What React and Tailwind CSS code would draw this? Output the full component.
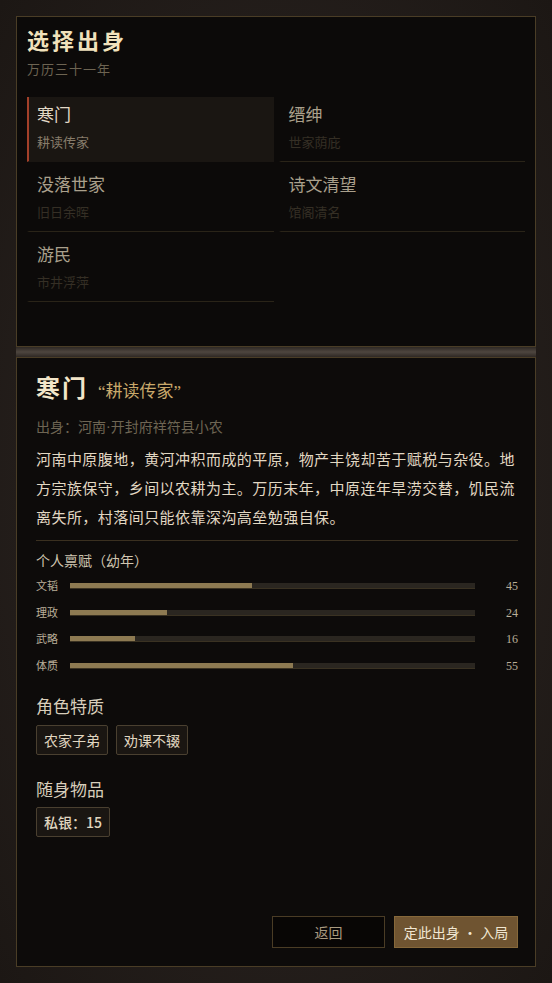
import React, { useState } from "react";

const origins = [
    { name: "寒门", sub: "耕读传家" },
    { name: "缙绅", sub: "世家荫庇" },
    { name: "没落世家", sub: "旧日余晖" },
    { name: "诗文清望", sub: "馆阁清名" },
    { name: "游民", sub: "市井浮萍" },
];

const stats = [
    { label: "文韬", value: 45 },
    { label: "理政", value: 24 },
    { label: "武略", value: 16 },
    { label: "体质", value: 55 },
];

// 正文用衬线拉丁字体 + CJK 回退，标签与按钮用无衬线
const serif = { fontFamily: '"Liberation Serif", "Noto Sans CJK SC", serif' };
const sans = { fontFamily: '"Noto Sans CJK SC", "Noto Sans", sans-serif' };

const App = () => {
    const [selected, setSelected] = useState(0);

    return (
        <div
            className="min-h-[983px] w-[552px] p-4 bg-[radial-gradient(ellipse_at_center,#2e2824_0%,#241e1b_60%,#1c1714_100%)]"
            style={serif}
        >
            {/* 选择出身 */}
            <div className="h-[331px] border border-[#4a3d26] bg-[#0c0a09] px-[10px] pt-[11px]">
                <h1 className="text-[22px] leading-[28px] font-bold tracking-[3px] text-[#f1e2bc]">选择出身</h1>
                <p className="mt-[5px] text-[13px] leading-[18px] tracking-[1px] text-[#6d6452]">万历三十一年</p>

                <div className="mt-[18px] grid grid-cols-2 gap-x-[5px] gap-y-[5px]">
                    {origins.map((o, i) => {
                        const active = i === selected;
                        return (
                            <div
                                key={o.name}
                                onClick={() => setSelected(i)}
                                className={`h-[65px] border-l-2 border-b pl-2 pt-[7px] cursor-pointer ${
                                    active
                                        ? "border-l-[#a3402a] border-b-transparent bg-[#1a1612]"
                                        : "border-l-transparent border-b-[#2a2418]"
                                }`}
                            >
                                <div className={`text-[17px] leading-[24px] ${active ? "text-[#e2d8c6]" : "text-[#aaa08c]"}`}>
                                    {o.name}
                                </div>
                                <div className={`mt-[6px] text-[13px] leading-[18px] ${active ? "text-[#877c6a]" : "text-[#352f25]"}`}>
                                    {o.sub}
                                </div>
                            </div>
                        );
                    })}
                </div>
            </div>

            <div className="h-[10px] bg-[linear-gradient(180deg,#2e2824,#4e463f_50%,#2e2824)]"></div>

            {/* 详情 */}
            <div className="h-[610px] border border-[#4a3d26] bg-[#0d0b0a] pl-[19px] pr-[17px] pt-[15px] pb-[18px] flex flex-col">
                <div className="flex items-baseline h-8">
                    <span className="text-[24px] leading-8 font-bold tracking-[2px] text-[#f2e6c9]">寒门</span>
                    <span className="ml-[10px] text-[17px] text-[#c9a96b]">“耕读传家”</span>
                </div>
                <p className="mt-[13px] text-[14px] leading-5 text-[#6e6553]">出身：河南·开封府祥符县小农</p>
                <p className="mt-[8px] text-[15px] leading-[29px] tracking-[0.45px] text-[#e2d8c3]">
                    河南中原腹地，黄河冲积而成的平原，物产丰饶却苦于赋税与杂役。地方宗族保守，乡间以农耕为主。万历末年，中原连年旱涝交替，饥民流离失所，村落间只能依靠深沟高垒勉强自保。
                </p>
                <div className="mt-[7px] h-px bg-[#3a3020]"></div>

                <p className="mt-[11px] text-[14px] leading-5 text-[#d0c6b1]">个人禀赋（幼年）</p>
                <div className="mt-px">
                    {stats.map((s) => (
                        <div key={s.label} className="flex items-center h-[26.5px]">
                            <span className="w-[34px] text-[11px] text-[#b9ae99]">{s.label}</span>
                            <div className="flex-1 h-[6px] bg-[#2a2620] border-b border-[#3a3222]">
                                <div className="h-full bg-[#8d7a52]" style={{ width: `${s.value}%` }}></div>
                            </div>
                            <span className="w-[43px] text-right text-[12px] text-[#b9ae99]">{s.value}</span>
                        </div>
                    ))}
                </div>

                <p className="mt-[15px] text-[17px] leading-6 text-[#d8cebb]" style={sans}>角色特质</p>
                <div className="mt-[7px] flex gap-2" style={sans}>
                    {["农家子弟", "劝课不辍"].map((t) => (
                        <span
                            key={t}
                            className="h-[30px] px-[7px] flex items-center border border-[#4a4030] bg-[#1a1612] rounded-[2px] text-[14px] text-[#e0d6c0]"
                        >
                            {t}
                        </span>
                    ))}
                </div>

                <p className="mt-[22px] text-[17px] leading-6 text-[#d8cebb]" style={sans}>随身物品</p>
                <div className="mt-[6px] flex" style={sans}>
                    <span className="h-[30px] px-[7px] flex items-center border border-[#4a4030] bg-[#1a1612] rounded-[2px] text-[14px] font-medium text-[#e0d6c0]">
                        私银：15
                    </span>
                </div>

                <div className="mt-auto flex justify-end gap-[9px]" style={sans}>
                    <button className="w-[113px] h-[32px] border border-[#4a3c25] bg-[#080605] text-[14px] text-[#a99a80]">
                        返回
                    </button>
                    <button className="w-[124px] h-[32px] border border-[#86683a] bg-[#6f5431] text-[14px] text-[#f1e7d3]">
                        定此出身 · 入局
                    </button>
                </div>
            </div>
        </div>
    );
};

export default App;
